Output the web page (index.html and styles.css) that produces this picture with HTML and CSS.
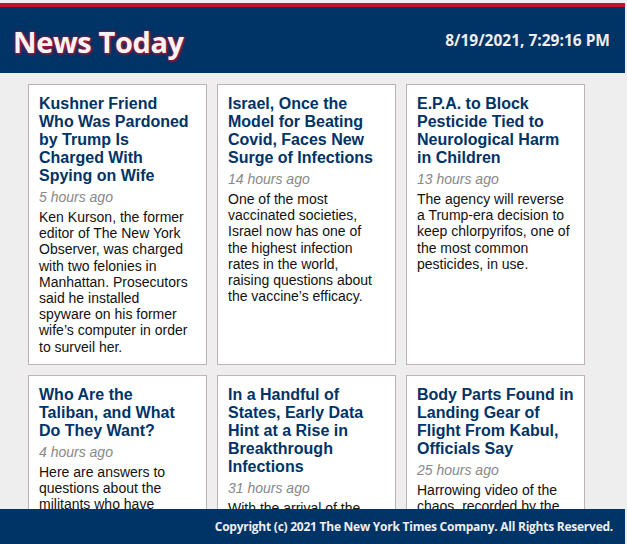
FILE: index.html
```html
<!DOCTYPE html>
<html lang="en">
<head>
<meta charset="utf-8">
<title>News Today</title>
<link rel="stylesheet" href="styles.css">
</head>
<body>
<div class="page">
  <header class="masthead">
    <h1 class="brand">News Today</h1>
    <div class="clock">8/19/2021, 7:29:16 PM</div>
  </header>
  <main class="main">
    <div class="grid">
      <article class="card">
        <h2 class="card-title">Kushner Friend Who Was Pardoned by Trump Is Charged With Spying on Wife</h2>
        <div class="card-time">5 hours ago</div>
        <p class="card-text">Ken Kurson, the former editor of The New York Observer, was charged with two felonies in Manhattan. Prosecutors said he installed spyware on his former wife’s computer in order to surveil her.</p>
      </article>
      <article class="card">
        <h2 class="card-title">Israel, Once the Model for Beating Covid, Faces New Surge of Infections</h2>
        <div class="card-time">14 hours ago</div>
        <p class="card-text">One of the most vaccinated societies, Israel now has one of the highest infection rates in the world, raising questions about the vaccine’s efficacy.</p>
      </article>
      <article class="card">
        <h2 class="card-title">E.P.A. to Block Pesticide Tied to Neurological Harm in Children</h2>
        <div class="card-time">13 hours ago</div>
        <p class="card-text">The agency will reverse a Trump-era decision to keep chlorpyrifos, one of the most common pesticides, in use.</p>
      </article>
      <article class="card">
        <h2 class="card-title">Who Are the Taliban, and What Do They Want?</h2>
        <div class="card-time">4 hours ago</div>
        <p class="card-text">Here are answers to questions about the militants who have seized control of Afghanistan after two decades of war.</p>
      </article>
      <article class="card">
        <h2 class="card-title">In a Handful of States, Early Data Hint at a Rise in Breakthrough Infections</h2>
        <div class="card-time">31 hours ago</div>
        <p class="card-text">With the arrival of the Delta variant, Covid cases among the vaccinated appear to be increasing.</p>
      </article>
      <article class="card">
        <h2 class="card-title">Body Parts Found in Landing Gear of Flight From Kabul, Officials Say</h2>
        <div class="card-time">25 hours ago</div>
        <p class="card-text">Harrowing video of the chaos, recorded by the crew, has circulated around the world.</p>
      </article>
    </div>
  </main>
  <footer class="footer">Copyright (c) 2021 The New York Times Company. All Rights Reserved.</footer>
</div>
</body>
</html>
```
FILE: styles.css
```css
html, body {
  margin: 0;
  padding: 0;
  height: 100%;
  overflow: hidden;
  background: #eeeeee;
}
.page {
  height: 544px;
  display: flex;
  flex-direction: column;
}
.masthead {
  margin: 3px 2px 0 0;
  border-top: 4px solid #c8102e;
  background: #003366;
  height: 66px;
  display: flex;
  align-items: center;
  justify-content: space-between;
  padding: 0 15px 0 13px;
  flex: none;
}
.brand {
  margin: 0;
  font-family: "Open Sans", "DejaVu Sans", sans-serif;
  font-weight: 700;
  font-size: 29px;
  letter-spacing: -0.4px;
  color: #f4f4f4;
  text-shadow: 1px 1px 3px #c8102e, 0 0 3px #c8102e;
  padding-top: 2px;
}
.clock {
  font-family: "Open Sans", "DejaVu Sans", sans-serif;
  font-weight: 700;
  font-size: 15.5px;
  color: #eeeeee;
}
.main {
  flex: 1;
  overflow: hidden;
  padding: 11px 0 0 28px;
}
.grid {
  display: grid;
  grid-template-columns: repeat(3, 179px);
  gap: 10px;
}
.card {
  background: #ffffff;
  border: 1px solid #bdb3b3;
  padding: 10px 10px 9px 10px;
  font-family: "Liberation Sans", Arial, sans-serif;
}
.card-title {
  margin: 0 0 3px;
  font-size: 16px;
  font-weight: 700;
  line-height: 18px;
  color: #003366;
}
.card-time {
  font-size: 14px;
  font-style: italic;
  color: #888888;
  line-height: 18px;
  margin-bottom: 3px;
}
.card-text {
  margin: 0 4px 0 0;
  font-size: 14px;
  line-height: 16.2px;
  color: #111111;
}
.footer {
  flex: none;
  height: 35px;
  margin-right: 2px;
  background: #003366;
  color: #eeeeee;
  font-family: "Open Sans", "DejaVu Sans", sans-serif;
  font-weight: 700;
  font-size: 12px;
  letter-spacing: -0.25px;
  display: flex;
  align-items: center;
  justify-content: flex-end;
  padding-right: 12px;
}
```
